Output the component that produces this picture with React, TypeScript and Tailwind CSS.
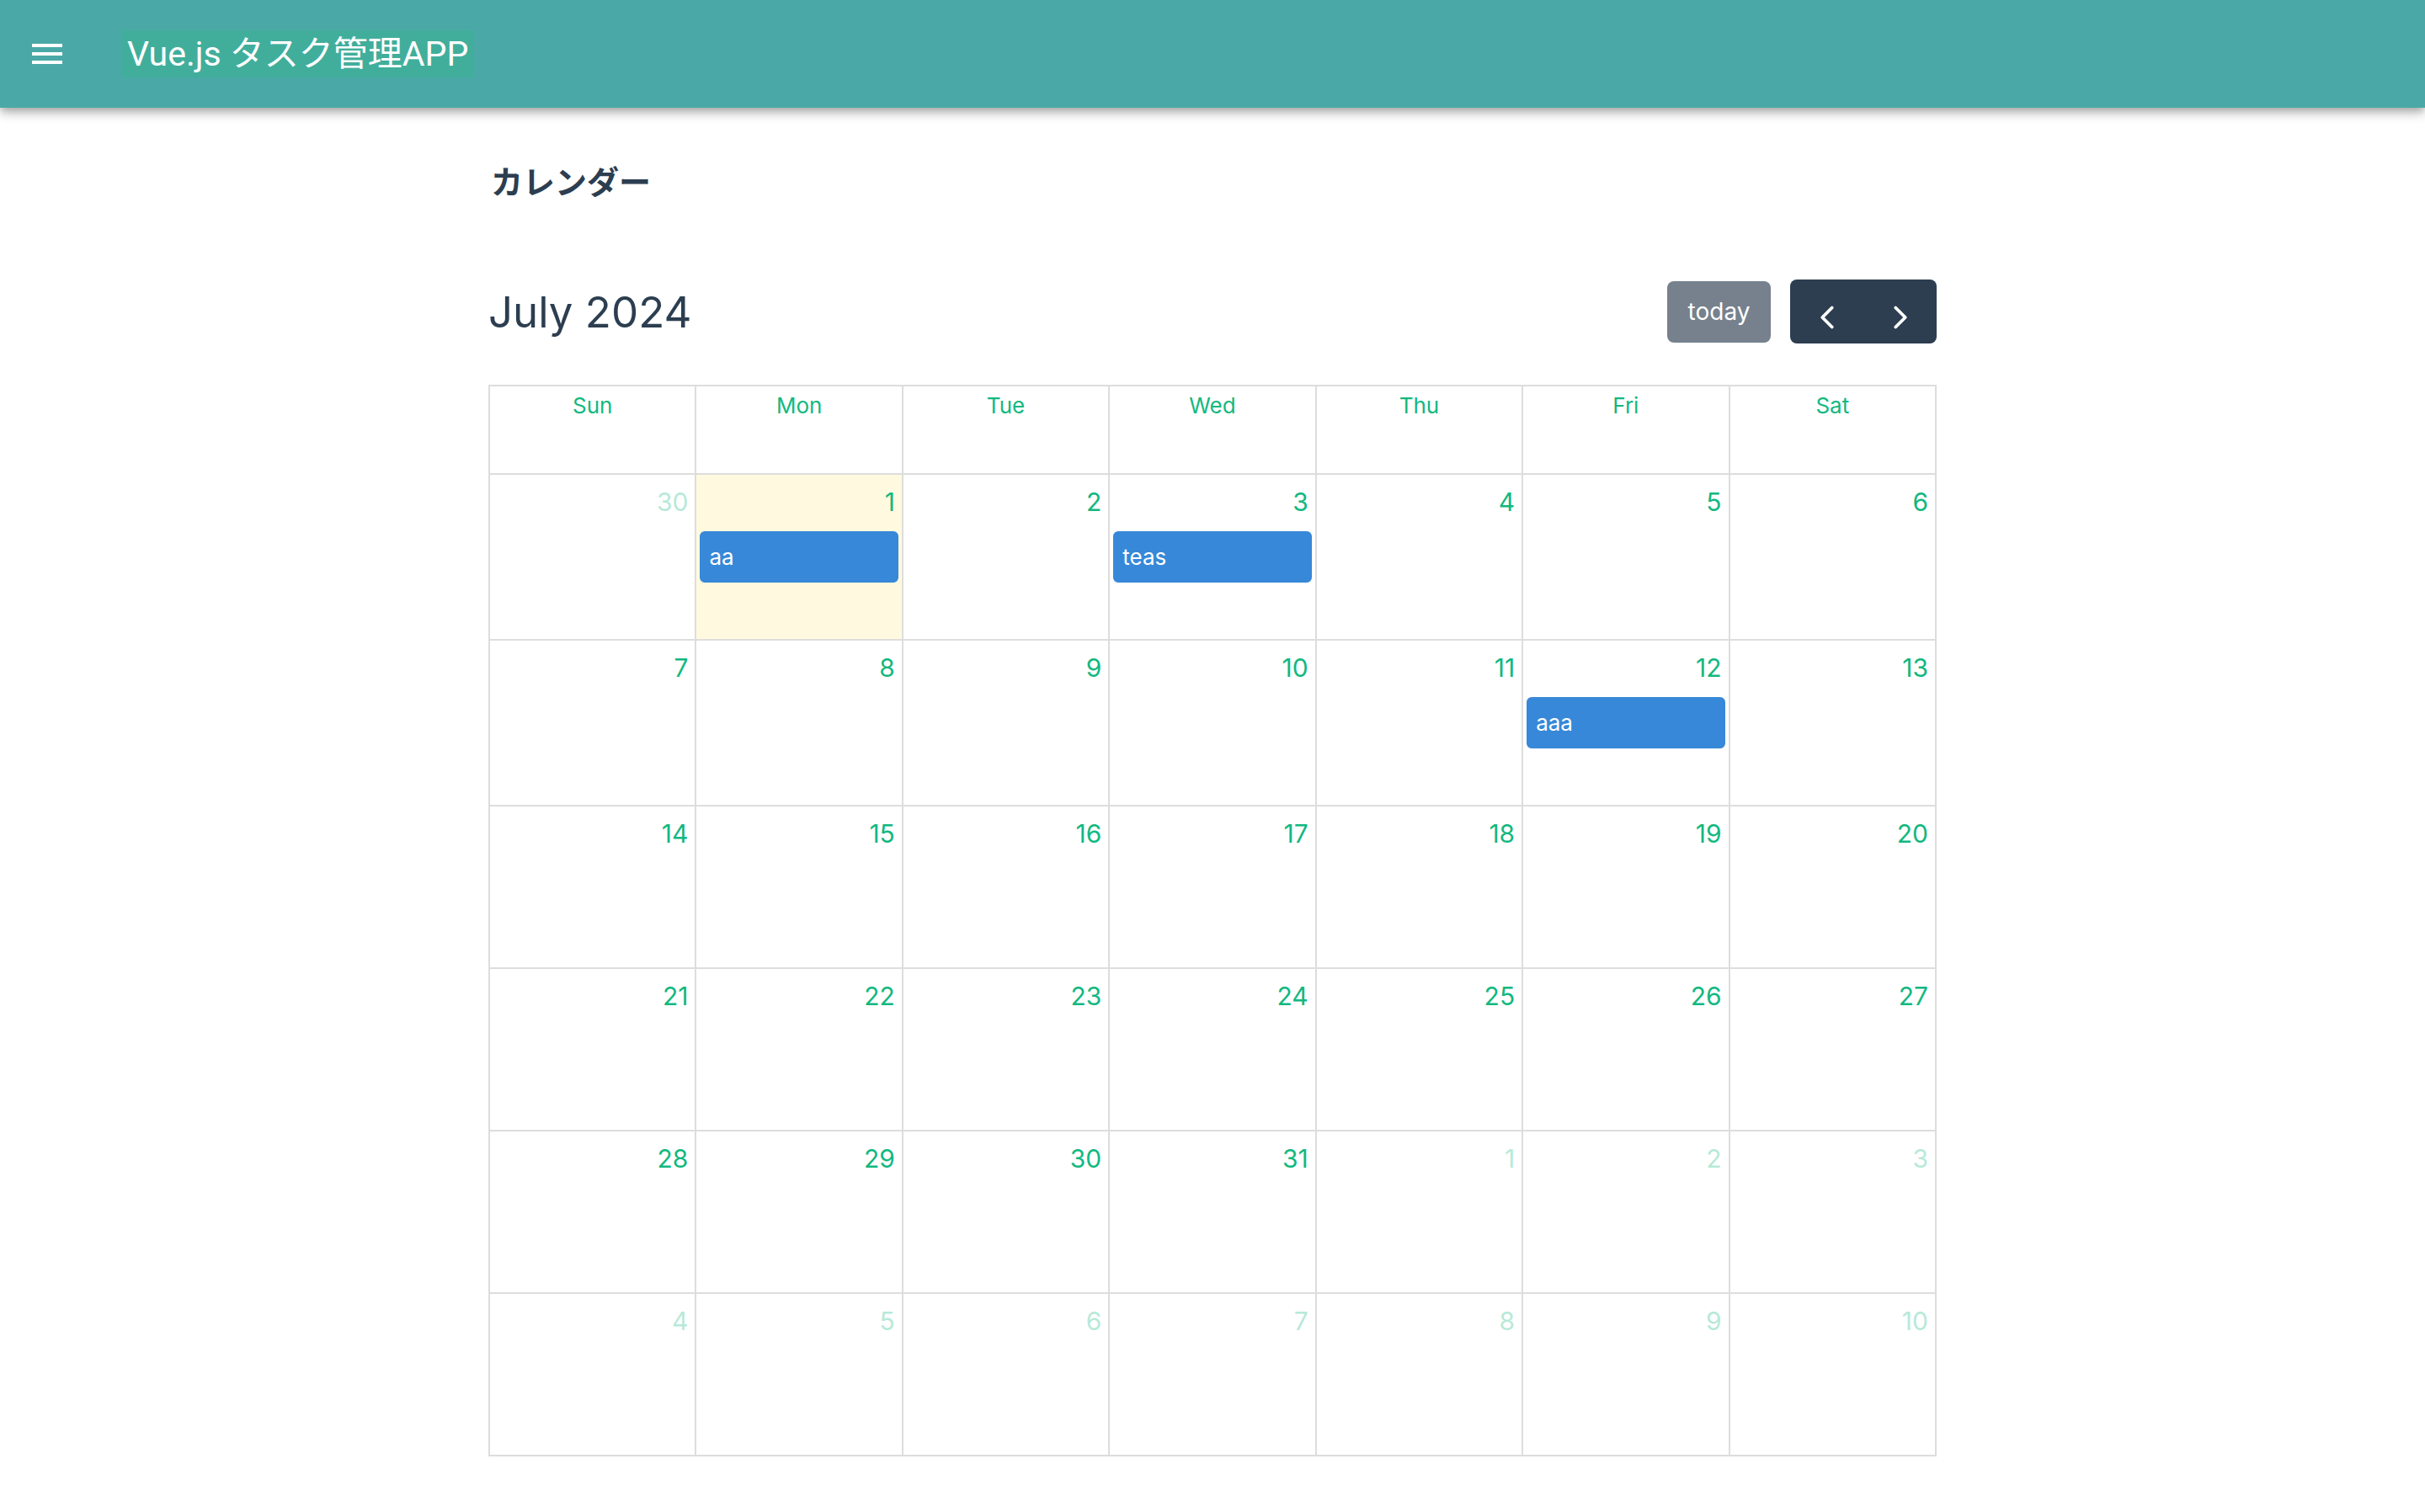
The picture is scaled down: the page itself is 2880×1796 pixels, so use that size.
import { ChevronLeft, ChevronRight } from 'lucide-react';

type Day = {
    n: number;
    other?: boolean;
    today?: boolean;
    event?: string;
};

const dayNames = ['Sun', 'Mon', 'Tue', 'Wed', 'Thu', 'Fri', 'Sat'];

// 2024年7月のカレンダー（前後の月を含む）
const weeks: Day[][] = [
    [{ n: 30, other: true }, { n: 1, today: true, event: 'aa' }, { n: 2 }, { n: 3, event: 'teas' }, { n: 4 }, { n: 5 }, { n: 6 }],
    [{ n: 7 }, { n: 8 }, { n: 9 }, { n: 10 }, { n: 11 }, { n: 12, event: 'aaa' }, { n: 13 }],
    [{ n: 14 }, { n: 15 }, { n: 16 }, { n: 17 }, { n: 18 }, { n: 19 }, { n: 20 }],
    [{ n: 21 }, { n: 22 }, { n: 23 }, { n: 24 }, { n: 25 }, { n: 26 }, { n: 27 }],
    [{ n: 28 }, { n: 29 }, { n: 30 }, { n: 31 }, { n: 1, other: true }, { n: 2, other: true }, { n: 3, other: true }],
    [
        { n: 4, other: true },
        { n: 5, other: true },
        { n: 6, other: true },
        { n: 7, other: true },
        { n: 8, other: true },
        { n: 9, other: true },
        { n: 10, other: true },
    ],
];

const rowHeights = ['h-[197px]', 'h-[197px]', 'h-[193px]', 'h-[193px]', 'h-[193px]', 'h-[193px]'];

function AppBar() {
    return (
        <header className="relative z-10 h-[128px] bg-[#4aa9a6] flex items-center shadow-[0_4px_8px_-2px_rgba(0,0,0,0.2),0_8px_10px_0_rgba(0,0,0,0.14),0_2px_20px_0_rgba(0,0,0,0.12)]">
            {/* Menu icon */}
            <button className="ml-[32px] w-[48px] h-[48px] flex items-center justify-center text-white">
                <svg width="48" height="48" viewBox="0 0 24 24" fill="currentColor">
                    <path d="M3,6H21V8H3V6M3,11H21V13H3V11M3,16H21V18H3V16Z" />
                </svg>
            </button>
            <div className="ml-[64px] h-[56px] px-[7px] flex items-center bg-[#41ae9c] text-white text-[41px] font-['Roboto','Noto_Sans_CJK_JP',sans-serif] leading-none">
                Vue.js タスク管理APP
            </div>
        </header>
    );
}

function Toolbar() {
    return (
        <div className="flex items-center justify-between h-[76px]">
            <h2 className="text-[51px] text-[#2c3e50] leading-none font-normal">July 2024</h2>
            <div className="flex items-center">
                <button className="w-[123px] h-[73px] rounded-[8px] bg-[#2c3e50]/65 text-white text-[28px] flex items-center justify-center">
                    today
                </button>
                <div className="ml-[23px] flex h-[76px] rounded-[8px] bg-[#2c3e50] text-white overflow-hidden">
                    <button className="w-[87px] flex items-center justify-center">
                        <ChevronLeft size={46} strokeWidth={2} className="translate-y-[7px]" />
                    </button>
                    <button className="w-[87px] flex items-center justify-center">
                        <ChevronRight size={46} strokeWidth={2} className="translate-y-[7px]" />
                    </button>
                </div>
            </div>
        </div>
    );
}

function Calendar() {
    return (
        <div className="mt-[49px] border-t-2 border-l-2 border-[#dddddd]">
            {/* Day names */}
            <div className="grid grid-cols-7">
                {dayNames.map((d) => (
                    <div key={d} className="h-[105px] border-r-2 border-b-2 border-[#dddddd] text-center text-[26px] leading-[39px] pt-[3px] text-[#12b880]">
                        {d}
                    </div>
                ))}
            </div>

            {/* Weeks */}
            {weeks.map((week, wi) => (
                <div key={wi} className="grid grid-cols-7">
                    {week.map((day, di) => (
                        <div
                            key={di}
                            className={`${rowHeights[wi]} border-r-2 border-b-2 border-[#dddddd] ${day.today ? 'bg-[rgba(255,220,40,0.15)]' : ''}`}
                        >
                            <div className={`text-right text-[30px] leading-[45px] pt-[10px] pr-[8px] text-[#12b880] ${day.other ? 'opacity-30' : ''}`}>
                                {day.n}
                            </div>
                            {day.event && (
                                <div className="mt-[12px] mx-[4px] h-[61px] rounded-[6px] bg-[#3788d8] border-2 border-[#3788d8] text-white text-[26px] flex items-center px-[9px]">
                                    {day.event}
                                </div>
                            )}
                        </div>
                    ))}
                </div>
            ))}
        </div>
    );
}

export default function App() {
    return (
        <div className="min-h-screen bg-white font-['Inter','Noto_Sans_CJK_JP',sans-serif]">
            <AppBar />
            <main className="w-[1720px] mx-auto">
                <h1 className="mt-[58px] text-[38px] leading-[60px] font-bold text-[#2c3e50] pl-[3px]">カレンダー</h1>
                <div className="mt-[86px]">
                    <Toolbar />
                </div>
                <Calendar />
            </main>
        </div>
    );
}
